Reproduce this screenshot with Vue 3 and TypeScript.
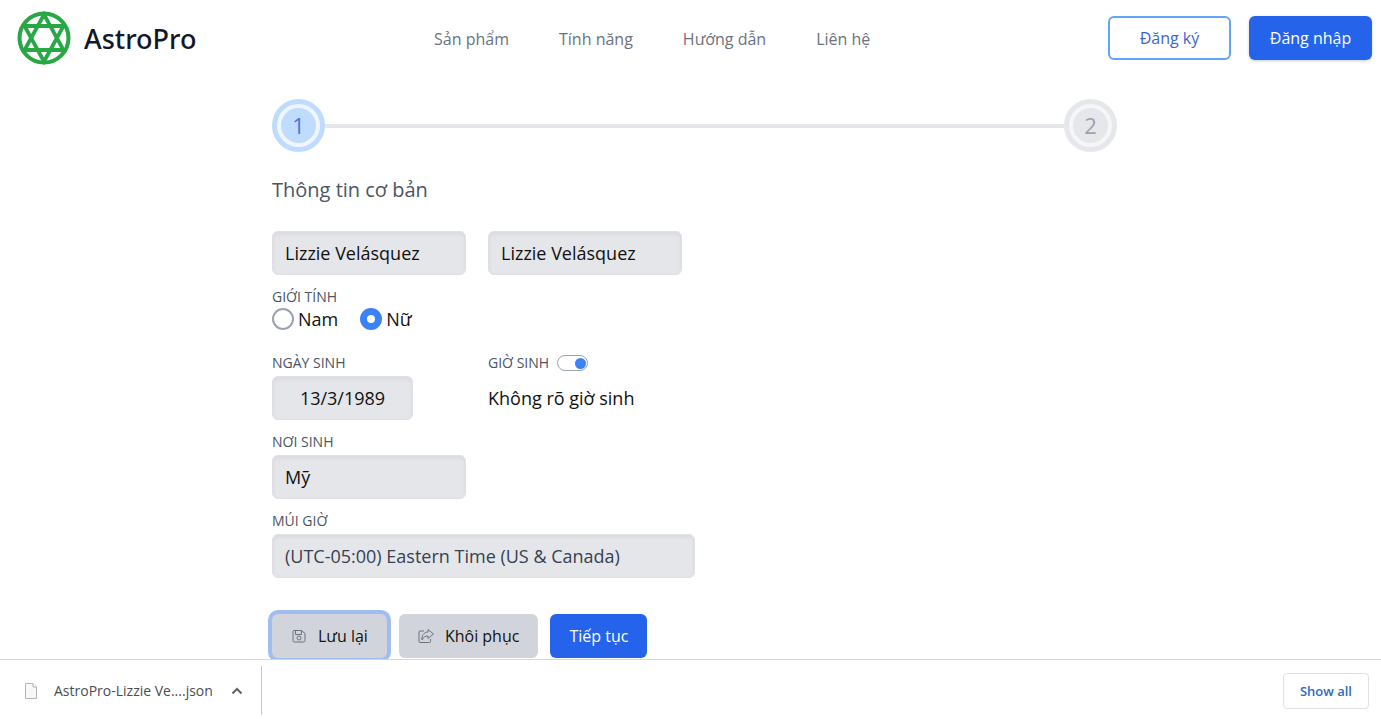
<script setup lang="ts">
import { ref } from 'vue'

const links = ['Sản phẩm', 'Tính năng', 'Hướng dẫn', 'Liên hệ']
const firstName = ref('Lizzie Velásquez')
const displayName = ref('Lizzie Velásquez')
const gender = ref<'male' | 'female'>('female')
const birthDate = ref('13/3/1989')
const unknownTime = ref(true)
const birthPlace = ref('Mỹ')
const timezone = ref('(UTC-05:00) Eastern Time (US & Canada)')
</script>

<template>
  <div class="window">
    <div class="page">
      <header class="header">
        <a class="brand" href="#">
          <svg class="logo" viewBox="0 0 54 54" fill="none" stroke="#28a745" stroke-width="4" aria-hidden="true">
            <circle cx="27" cy="27" r="24.5" />
            <path stroke-width="3.8" d="M27 3.5 L46.5 39 H7.5 Z" />
            <path stroke-width="3.8" d="M27 50.5 L46.5 15 H7.5 Z" />
          </svg>
          <span>AstroPro</span>
        </a>
        <nav class="nav">
          <a v-for="link in links" :key="link" href="#">{{ link }}</a>
        </nav>
        <div class="auth">
          <button type="button" class="btn outline">Đăng ký</button>
          <button type="button" class="btn primary raised">Đăng nhập</button>
        </div>
      </header>

      <main class="main">
        <form class="form" @submit.prevent>
          <div class="steps">
            <div class="step active"><span>1</span></div>
            <div class="line"></div>
            <div class="step"><span>2</span></div>
          </div>

          <h1>Thông tin cơ bản</h1>

          <div class="row">
            <input v-model="firstName" class="field" type="text" aria-label="Tên" />
            <input v-model="displayName" class="field" type="text" aria-label="Tên hiển thị" />
          </div>

          <fieldset class="gender">
            <legend class="label">GIỚI TÍNH</legend>
            <div class="options">
              <label><input v-model="gender" type="radio" name="gender" value="male" />Nam</label>
              <label><input v-model="gender" type="radio" name="gender" value="female" />Nữ</label>
            </div>
          </fieldset>

          <div class="row birth">
            <div class="group">
              <label class="label" for="birth-date">NGÀY SINH</label>
              <input id="birth-date" v-model="birthDate" class="field date" type="text" />
            </div>
            <div class="group">
              <label class="label switch">GIỜ SINH<input v-model="unknownTime" type="checkbox" role="switch" /></label>
              <p class="note">Không rõ giờ sinh</p>
            </div>
          </div>

          <div class="group spaced">
            <label class="label" for="birth-place">NƠI SINH</label>
            <input id="birth-place" v-model="birthPlace" class="field" type="text" />
          </div>

          <div class="group spaced">
            <label class="label" for="timezone">MÚI GIỜ</label>
            <select id="timezone" v-model="timezone" class="field zone">
              <option>(UTC-05:00) Eastern Time (US &amp; Canada)</option>
            </select>
          </div>

          <div class="actions">
            <button type="button" class="btn grey focused">
              <svg class="icon" viewBox="0 0 16 16" fill="none" stroke="#6b7280" aria-hidden="true">
                <path d="M3 2.5 H10.5 L14 5.5 V12.5 Q14 14 12.5 14 H3.5 Q2 14 2 12.5 V3.5 Q2 2.5 3 2.5 Z" />
                <path d="M4.5 2.5 V6.5 H10.5 V2.5" />
                <circle cx="8" cy="10" r="2" />
              </svg>
              Lưu lại
            </button>
            <button type="button" class="btn grey">
              <svg class="icon" viewBox="0 0 16 16" fill="none" stroke="#6b7280" stroke-linejoin="round" aria-hidden="true">
                <path d="M6 3 H2 Q1 3 1 4 V13.5 Q1 14.5 2 14.5 H11.5 Q12.5 14.5 12.5 13.5 V11" />
                <path d="M10 1.5 L15.5 6 L10 10.5 V8 C7 7.8 5.5 9 4 12 C3.5 7.5 6 4.3 10 4 Z" />
              </svg>
              Khôi phục
            </button>
            <button type="submit" class="btn primary">Tiếp tục</button>
          </div>
        </form>
      </main>
    </div>

    <footer class="downloads">
      <button type="button" class="file">
        <svg class="doc" viewBox="0 0 12 16" fill="#f8f8f8" stroke="#b4b4b4" aria-hidden="true">
          <path d="M0.5 0.5 H8 L11.5 4 V15.5 H0.5 Z" />
          <path d="M8 0.5 V4 H11.5" />
        </svg>
        <span>AstroPro-Lizzie Ve....json</span>
      </button>
      <button type="button" class="more" aria-label="Tùy chọn tệp">
        <svg viewBox="0 0 12 8" fill="none" stroke="#5f6368" stroke-width="2" aria-hidden="true">
          <path d="M1.5 6.5 L6 2 L10.5 6.5" />
        </svg>
      </button>
      <button type="button" class="show-all">Show all</button>
    </footer>
  </div>
</template>

<style>
body {
  margin: 0;
  background: #fff;
}
</style>

<style scoped>
.window {
  height: 100vh;
  display: flex;
  flex-direction: column;
  font-family: "Open Sans", "Noto Sans", sans-serif;
  font-size: 18px;
  color: #111827;
}
.window * {
  box-sizing: border-box;
}
button,
input,
select {
  font: inherit;
  color: inherit;
  margin: 0;
}
a {
  color: inherit;
  text-decoration: none;
}
.page {
  flex: 1;
  min-height: 0;
  overflow: hidden;
}
.header {
  display: flex;
  align-items: center;
  justify-content: space-between;
  height: 76px;
  padding: 0 9px 0 17px;
}
.brand {
  display: flex;
  align-items: center;
  gap: 13px;
  font-family: "Noto Sans", sans-serif;
  font-size: 27px;
  font-weight: 500;
}
.logo {
  width: 54px;
  height: 54px;
}
.nav {
  display: flex;
  gap: 50px;
  padding-top: 2px;
  font-size: 16px;
  color: #6b7280;
}
.auth {
  display: flex;
  gap: 18px;
}
.auth .btn {
  width: 123px;
}
.btn {
  display: flex;
  align-items: center;
  justify-content: center;
  height: 44px;
  padding: 0 19px;
  border: 0;
  border-radius: 6px;
  font-size: 16px;
  white-space: nowrap;
}
.outline {
  border: 2px solid #60a5fa;
  background: #fff;
  color: #3b66cf;
}
.primary {
  background: #2563eb;
  color: #fff;
}
.raised {
  box-shadow: 0 1px 3px rgba(0, 0, 0, 0.2);
}
.main {
  padding: 23px 0 0 8px;
}
.form {
  max-width: 845px;
  margin: 0 auto;
}
.steps {
  display: flex;
  align-items: center;
}
.step {
  display: flex;
  align-items: center;
  justify-content: center;
  width: 53px;
  height: 53px;
  border: 5px solid #e5e7eb;
  border-radius: 50%;
  background: #f5f6f8;
  font-size: 22px;
  color: #9ca3af;
}
.step span {
  width: 35px;
  border-radius: 50%;
  background: #e5e7eb;
  line-height: 35px;
  text-align: center;
}
.step.active {
  border-color: #bfdbfe;
  background: #eff6ff;
  color: #4f74dc;
}
.step.active span {
  background: #bfdbfe;
}
.line {
  flex: 1;
  height: 4px;
  background: #e5e7eb;
}
h1 {
  margin: 23px 0 26px;
  font-size: 20px;
  font-weight: 400;
  line-height: 30px;
  color: #4b5563;
}
.row {
  display: flex;
  gap: 22px;
}
.group {
  display: flex;
  flex-direction: column;
  align-items: flex-start;
  gap: 2px;
}
.row .group {
  width: 194px;
}
.spaced {
  margin-top: 11px;
}
.label {
  padding: 0;
  font-size: 14px;
  line-height: 22px;
  color: #4b5563;
}
.field {
  width: 194px;
  height: 44px;
  padding: 0 12px;
  border: 1px solid #dfe0e5;
  border-radius: 6px;
  background: #e5e6ea;
  box-shadow: inset 0 2px 4px rgba(0, 0, 0, 0.06);
  color: #111;
}
.date {
  width: 141px;
  text-align: center;
}
.zone {
  width: 423px;
  max-width: 100%;
  appearance: none;
  color: #374151;
}
.gender {
  margin: 11px 0 0;
  padding: 0;
  border: 0;
}
.options {
  display: flex;
  gap: 22px;
}
.options label {
  display: flex;
  align-items: center;
  gap: 4px;
  height: 22px;
  color: #111;
}
.options input {
  appearance: none;
  width: 22px;
  height: 22px;
  border: 2px solid #9ca3af;
  border-radius: 50%;
  background: #fff;
}
.options input:checked {
  border: 7px solid #3b82f6;
}
.birth {
  margin-top: 22px;
}
.switch {
  display: flex;
  align-items: center;
  gap: 8px;
}
.switch input {
  appearance: none;
  display: flex;
  align-items: center;
  width: 31px;
  height: 16px;
  padding: 0 1px;
  border: 1px solid #9ca3af;
  border-radius: 8px;
}
.switch input::before {
  content: "";
  width: 11px;
  height: 11px;
  border-radius: 50%;
  background: #9ca3af;
}
.switch input:checked {
  justify-content: flex-end;
}
.switch input:checked::before {
  background: #3b82f6;
}
.note {
  margin: 0;
  line-height: 44px;
  color: #111;
}
.actions {
  display: flex;
  gap: 12px;
  margin-top: 36px;
}
.grey {
  gap: 11px;
  background: #d1d5db;
  color: #111;
}
.focused {
  box-shadow: 0 0 0 4px #9fbdf3;
}
.icon {
  width: 16px;
  height: 16px;
}
.downloads {
  display: flex;
  align-items: center;
  flex-shrink: 0;
  height: 60px;
  padding: 2px 12px 0 0;
  border-top: 1px solid #d5d7da;
  background: #fff;
}
.downloads button {
  background: none;
  border: 0;
}
.downloads .file {
  display: flex;
  align-items: center;
  gap: 17px;
  padding: 0 0 0 25px;
  font-size: 14px;
  color: #4a4d51;
}
.doc {
  width: 12px;
  height: 16px;
}
.downloads .more {
  display: flex;
  align-items: center;
  align-self: stretch;
  margin: 4px 0;
  padding: 0 18px;
  border-right: 1px solid #c4c6ca;
}
.more svg {
  width: 12px;
  height: 8px;
}
.downloads .show-all {
  height: 36px;
  margin-left: auto;
  padding: 0 16px;
  border: 1px solid #dfe1e5;
  border-radius: 4px;
  font-size: 13px;
  font-weight: 600;
  color: #2b6bc0;
}
</style>
